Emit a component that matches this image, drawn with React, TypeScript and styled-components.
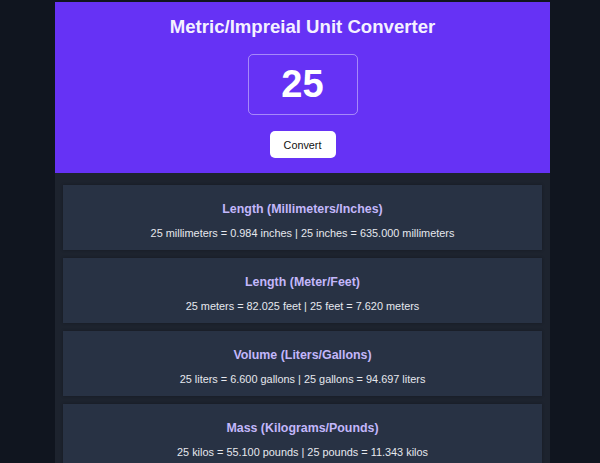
import React, { useState } from "react";
import styled, { createGlobalStyle } from "styled-components";

const GlobalStyle = createGlobalStyle`
  html, body {
    margin: 0;
    padding: 0;
    background: #10151f;
    overflow: hidden;
    font-family: "Liberation Sans", Arial, sans-serif;
  }
  * { box-sizing: border-box; }
`;

const Page = styled.div`
  padding-top: 2px;
  min-height: 463px;
`;

const Container = styled.main`
  width: 495px;
  margin-left: 55px;
  background: #1d232e;
  min-height: 461px;
`;

const Header = styled.header`
  background: #6632f5;
  height: 171px;
  padding: 14px 0 15px;
  display: flex;
  flex-direction: column;
  align-items: center;
  gap: 16px;
`;

const Title = styled.h1`
  margin: 0;
  font-size: 18.6px;
  line-height: 22px;
  font-weight: 700;
  color: #f4f1ff;
`;

const NumberInput = styled.input`
  width: 110px;
  height: 61px;
  background: transparent;
  border: 1px solid rgba(255, 255, 255, 0.42);
  border-radius: 5px;
  color: #ffffff;
  font-family: "Liberation Sans", Arial, sans-serif;
  font-size: 38px;
  font-weight: 700;
  text-align: center;
  outline: none;
  padding: 0;
`;

const ConvertButton = styled.button`
  width: 66px;
  height: 27px;
  background: #ffffff;
  color: #111111;
  border: none;
  border-radius: 5px;
  font-family: "Liberation Sans", Arial, sans-serif;
  font-size: 10.8px;
  cursor: pointer;
  padding: 0;
`;

const Results = styled.section`
  padding: 12px 8px 8px;
  display: flex;
  flex-direction: column;
  gap: 8px;
`;

const Card = styled.div`
  background: #283244;
  padding: 17px 8px 9px;
  text-align: center;
  box-shadow: 0 0 3px rgba(0, 0, 0, 0.25);
`;

const CardTitle = styled.h2`
  margin: 0 0 9px;
  font-size: 12.4px;
  line-height: 15px;
  font-weight: 700;
  color: #c3b7fb;
`;

const CardText = styled.p`
  margin: 0;
  font-size: 10.9px;
  line-height: 15px;
  color: #e6e8ee;
`;

type Conversion = {
  title: string;
  metric: string;
  imperial: string;
  factor: number;
};

const conversions: Conversion[] = [
  { title: "Length (Millimeters/Inches)", metric: "millimeters", imperial: "inches", factor: 1 / 25.4 },
  { title: "Length (Meter/Feet)", metric: "meters", imperial: "feet", factor: 3.281 },
  { title: "Volume (Liters/Gallons)", metric: "liters", imperial: "gallons", factor: 0.264 },
  { title: "Mass (Kilograms/Pounds)", metric: "kilos", imperial: "pounds", factor: 2.204 },
];

export default function App() {
  const [input, setInput] = useState("25");
  const [value, setValue] = useState(25);

  return (
    <Page>
      <GlobalStyle />
      <Container>
        <Header>
          <Title>Metric/Impreial Unit Converter</Title>
          <NumberInput value={input} onChange={(e) => setInput(e.target.value)} />
          <ConvertButton onClick={() => setValue(Number(input) || 0)}>Convert</ConvertButton>
        </Header>
        <Results>
          {conversions.map((c) => (
            <Card key={c.title}>
              <CardTitle>{c.title}</CardTitle>
              <CardText>
                {value} {c.metric} = {(value * c.factor).toFixed(3)} {c.imperial} | {value} {c.imperial} ={" "}
                {(value / c.factor).toFixed(3)} {c.metric}
              </CardText>
            </Card>
          ))}
        </Results>
      </Container>
    </Page>
  );
}
